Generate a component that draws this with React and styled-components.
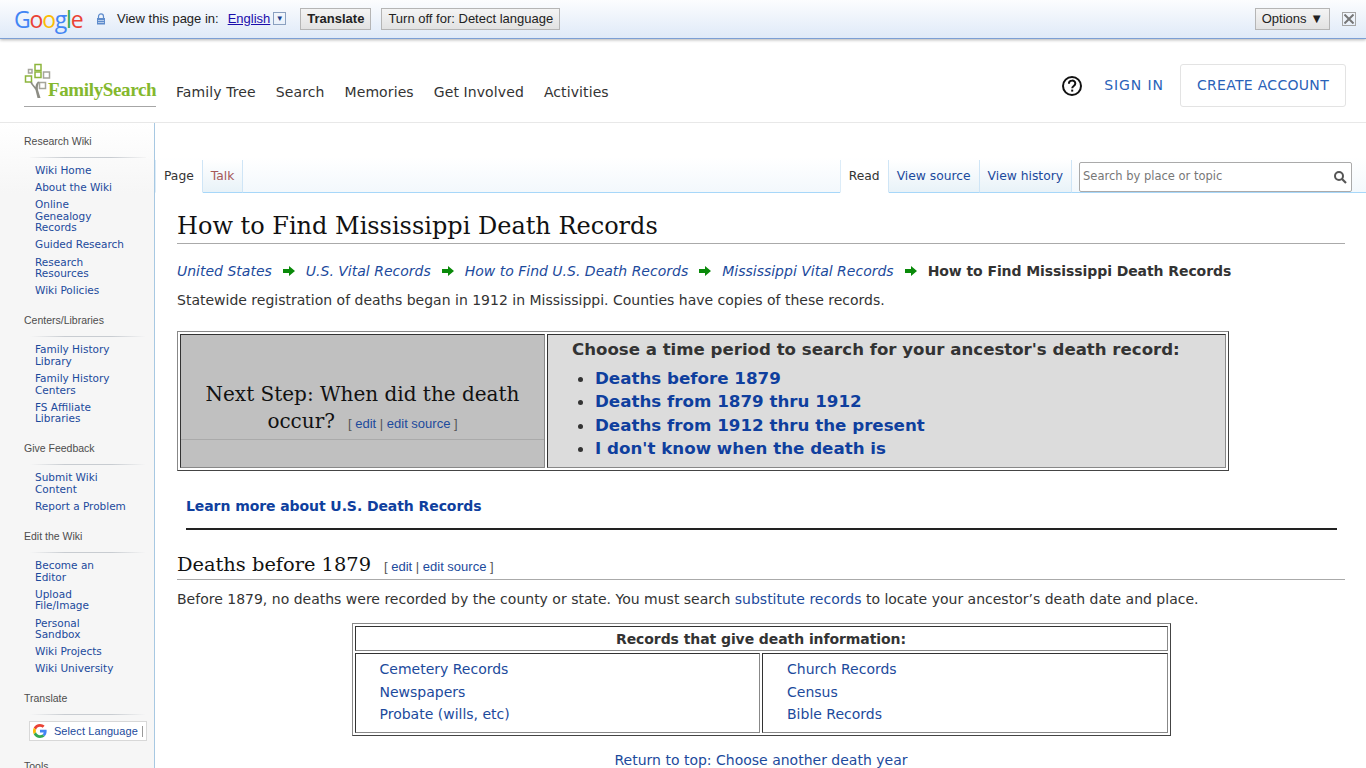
import styled, { createGlobalStyle } from "styled-components";

const GlobalStyle = createGlobalStyle`
  html, body {
    margin: 0;
    padding: 0;
    height: 768px;
    overflow: hidden;
    background: #fff;
    font-family: "DejaVu Sans", Verdana, sans-serif;
    color: #333;
  }
  a { color: #1c4a9c; text-decoration: none; }
`;

const sideNav = [
  { title: "Research Wiki", links: ["Wiki Home", "About the Wiki", "Online Genealogy Records", "Guided Research", "Research Resources", "Wiki Policies"] },
  { title: "Centers/Libraries", links: ["Family History Library", "Family History Centers", "FS Affiliate Libraries"] },
  { title: "Give Feedback", links: ["Submit Wiki Content", "Report a Problem"] },
  { title: "Edit the Wiki", links: ["Become an Editor", "Upload File/Image", "Personal Sandbox", "Wiki Projects", "Wiki University"] },
];

const crumbs = ["United States", "U.S. Vital Records", "How to Find U.S. Death Records", "Mississippi Vital Records"];

export default function App() {
  return (
    <>
      <GlobalStyle />
      <TranslateBar>
        <GoogleWord>
          <GoogleLetter $c="#4285f4">G</GoogleLetter>
          <GoogleLetter $c="#ea4335">o</GoogleLetter>
          <GoogleLetter $c="#fbbc05">o</GoogleLetter>
          <GoogleLetter $c="#4285f4">g</GoogleLetter>
          <GoogleLetter $c="#34a853">l</GoogleLetter>
          <GoogleLetter $c="#ea4335">e</GoogleLetter>
        </GoogleWord>
        <LockIcon viewBox="0 0 10 12">
          <path d="M2.500 5V3.400a2.500 2.500 0 0 1 5 0V5" fill="none" stroke="#5f8ccc" strokeWidth="1.200" />
          <rect x="1" y="5" width="8" height="6.500" fill="#5f8ccc" />
          <path d="M2 7.500h6M2 9.500h6" stroke="#dbe6f5" strokeWidth="0.700" />
        </LockIcon>
        <BarLabel>View this page in:</BarLabel>
        <LangLink>English</LangLink>
        <LangDrop>▼</LangDrop>
        <BarButton $bold>Translate</BarButton>
        <BarButton>Turn off for: Detect language</BarButton>
        <BarSpacer />
        <BarButton>Options ▼</BarButton>
        <CloseBox>
          <svg width="10" height="10" viewBox="0 0 10 10">
            <path d="M0.500 0.500l9 9M9.500 0.500l-9 9" stroke="#777" strokeWidth="2" />
          </svg>
        </CloseBox>
      </TranslateBar>

      <SiteHeader>
        <Logo>
          <svg width="34" height="36" viewBox="0 0 34 36">
            <g fill="none" strokeWidth="1.500">
              <rect x="11" y="1.500" width="6" height="6" stroke="#8db53c" />
              <rect x="4.500" y="6.500" width="3.500" height="3.500" stroke="#a5a59a" />
              <rect x="1.500" y="13" width="6" height="6" stroke="#8db53c" />
              <rect x="11" y="9" width="6" height="5.500" stroke="#8db53c" />
              <rect x="19.500" y="9" width="6" height="6" stroke="#a5a59a" />
              <rect x="15.500" y="19.500" width="6" height="6" stroke="#a5a59a" />
            </g>
            <path d="M6 19c1 3 4 5 5.500 8l2 8h3l-2.500-8c-.500-3 0-6 1.500-8l-1.500-.500c-1.500 1.500-2.500 3.500-2.500 5.500-1.500-2-3-3-3.500-5z" fill="#8d8d84" />
          </svg>
          <LogoWord>FamilySearch</LogoWord>
        </Logo>
        <MainNav>
          <a>Family Tree</a>
          <a>Search</a>
          <a>Memories</a>
          <a>Get Involved</a>
          <a>Activities</a>
        </MainNav>
        <HeaderRight>
          <svg width="22" height="22" viewBox="0 0 22 22">
            <circle cx="11" cy="11" r="9" fill="none" stroke="#111" strokeWidth="2" />
            <path d="M7.900 8.800c0-4.200 6.400-4.200 6.400-.2 0 2.400-3.100 2.300-3.100 4.600" fill="none" stroke="#111" strokeWidth="2" />
            <rect x="10.200" y="14.600" width="2" height="2" fill="#111" />
          </svg>
          <SignIn>SIGN IN</SignIn>
          <CreateAccount>CREATE ACCOUNT</CreateAccount>
        </HeaderRight>
      </SiteHeader>

      <PageBody>
        <Sidebar>
          {sideNav.map((s) => (
            <NavSection key={s.title}>
              <NavTitle>{s.title}</NavTitle>
              <NavList>
                {s.links.map((l) => (
                  <li key={l}><a>{l}</a></li>
                ))}
              </NavList>
            </NavSection>
          ))}
          <NavSection>
            <NavTitle>Translate</NavTitle>
            <TranslateWidget>
              <svg width="14" height="14" viewBox="0 0 48 48">
                <path fill="#ea4335" d="M24 9.500c3.500 0 6.700 1.200 9.200 3.600l6.800-6.800C35.900 2.400 30.500 0 24 0 14.600 0 6.500 5.400 2.600 13.200l7.900 6.200C12.400 13.700 17.700 9.500 24 9.500z" />
                <path fill="#4285f4" d="M47 24.500c0-1.600-.1-3.100-.4-4.500H24v9h12.900c-.6 3-2.200 5.500-4.800 7.200l7.700 6c4.500-4.200 7.200-10.300 7.200-17.700z" />
                <path fill="#fbbc05" d="M10.500 28.600c-.5-1.400-.8-3-.8-4.600s.3-3.200.8-4.600l-7.900-6.200C1 16.500 0 20.100 0 24s1 7.500 2.600 10.800l7.900-6.200z" />
                <path fill="#34a853" d="M24 48c6.500 0 11.900-2.100 15.900-5.800l-7.700-6c-2.200 1.500-4.900 2.300-8.200 2.300-6.300 0-11.600-4.200-13.500-9.900l-7.900 6.200C6.500 42.600 14.600 48 24 48z" />
              </svg>
              <a>Select Language</a>
              <WidgetBar />
            </TranslateWidget>
          </NavSection>
          <NavSection>
            <NavTitle>Tools</NavTitle>
            <NavList>
              <li><a>What links here</a></li>
              <li><a>Related changes</a></li>
            </NavList>
          </NavSection>
        </Sidebar>

        <Main>
          <TabRow>
            <TabGroup>
              <Tab $active>Page</Tab>
              <Tab $red>Talk</Tab>
            </TabGroup>
            <TabGroup>
              <Tab $active>Read</Tab>
              <Tab>View source</Tab>
              <Tab>View history</Tab>
              <SearchBox>
                <span>Search by place or topic</span>
                <svg width="14" height="14" viewBox="0 0 14 14">
                  <circle cx="6" cy="6" r="4" fill="none" stroke="#555" strokeWidth="2" />
                  <path d="M9 9l4 4" stroke="#555" strokeWidth="2.200" />
                </svg>
              </SearchBox>
            </TabGroup>
          </TabRow>

          <Article>
            <PageTitle>How to Find Mississippi Death Records</PageTitle>
            <Breadcrumb>
              {crumbs.map((c) => (
                <span key={c}>
                  <a>{c}</a>
                  <Arrow viewBox="0 0 12 10">
                    <path d="M0 3h6V0l6 5-6 5V7H0z" fill="#0a8a0a" />
                  </Arrow>
                </span>
              ))}
              <strong>How to Find Mississippi Death Records</strong>
            </Breadcrumb>
            <Intro>Statewide registration of deaths began in 1912 in Mississippi. Counties have copies of these records.</Intro>

            <StepTable>
              <tbody>
                <tr>
                  <StepLeft>
                    <StepHeading>
                      Next Step: When did the death occur?
                      <SmallEdit>[ <a>edit</a> | <a>edit source</a> ]</SmallEdit>
                    </StepHeading>
                  </StepLeft>
                  <StepRight>
                    <StepTitle>Choose a time period to search for your ancestor's death record:</StepTitle>
                    <StepList>
                      <li><a>Deaths before 1879</a></li>
                      <li><a>Deaths from 1879 thru 1912</a></li>
                      <li><a>Deaths from 1912 thru the present</a></li>
                      <li><a>I don't know when the death is</a></li>
                    </StepList>
                  </StepRight>
                </tr>
              </tbody>
            </StepTable>

            <LearnMore><a>Learn more about U.S. Death Records</a></LearnMore>
            <BlackRule />

            <SectionHeading>
              Deaths before 1879
              <SmallEdit>[ <a>edit</a> | <a>edit source</a> ]</SmallEdit>
            </SectionHeading>
            <Paragraph>
              Before 1879, no deaths were recorded by the county or state. You must search <a>substitute records</a> to locate your ancestor’s death date and place.
            </Paragraph>

            <RecordsTable>
              <tbody>
                <tr>
                  <RecordsHead colSpan={2}>Records that give death information:</RecordsHead>
                </tr>
                <tr>
                  <RecordsCell>
                    <a>Cemetery Records</a>
                    <a>Newspapers</a>
                    <a>Probate (wills, etc)</a>
                  </RecordsCell>
                  <RecordsCell>
                    <a>Church Records</a>
                    <a>Census</a>
                    <a>Bible Records</a>
                  </RecordsCell>
                </tr>
              </tbody>
            </RecordsTable>

            <ReturnLink><a>Return to top: Choose another death year</a></ReturnLink>
          </Article>
        </Main>
      </PageBody>
    </>
  );
}

const TranslateBar = styled.div`
  height: 39px;
  box-sizing: border-box;
  display: flex;
  align-items: center;
  padding: 0 10px 1px 14px;
  background: linear-gradient(#fcfdfe, #dfeaf8);
  border-bottom: 1px solid #7c9fd4;
  box-shadow: 0 1px 3px rgba(0, 0, 0, 0.3);
  position: relative;
  font-family: "Liberation Sans", Arial, sans-serif;
  font-size: 13px;
  color: #222;
`;

const GoogleWord = styled.div`
  font-family: "Open Sans", sans-serif;
  font-size: 23px;
  font-weight: 500;
  letter-spacing: -1.2px;
  width: 82px;
`;

const GoogleLetter = styled.span`
  color: ${(p) => p.$c};
`;

const LockIcon = styled.svg`
  width: 10px;
  height: 12px;
  margin-right: 11px;
`;

const BarLabel = styled.span`
  margin-right: 9px;
`;

const LangLink = styled.span`
  color: #1a0dab;
  text-decoration: underline;
  margin-right: 3px;
`;

const LangDrop = styled.span`
  width: 13px;
  height: 13px;
  box-sizing: border-box;
  border: 1px solid #8aa0c0;
  font-size: 8px;
  line-height: 11px;
  text-align: center;
  color: #1b3f8c;
  margin-right: 14px;
`;

const BarButton = styled.button`
  height: 22px;
  padding: 0 6px;
  margin-right: 10px;
  border: 1px solid #b5b5b5;
  background: linear-gradient(#f4f4f4, #e2e2e2);
  font-family: "Liberation Sans", Arial, sans-serif;
  font-size: 13px;
  font-weight: ${(p) => (p.$bold ? 700 : 400)};
  color: #222;
`;

const BarSpacer = styled.div`
  flex: 1;
`;

const CloseBox = styled.div`
  width: 14px;
  height: 14px;
  box-sizing: border-box;
  margin-left: 2px;
  border: 1px solid #a5a5a5;
  display: flex;
  align-items: center;
  justify-content: center;
`;

const SiteHeader = styled.header`
  height: 84px;
  box-sizing: border-box;
  display: flex;
  padding: 0 20px 0 24px;
  border-bottom: 1px solid #e8e8e8;
`;

const Logo = styled.div`
  width: 132px;
  height: 43px;
  margin-top: 24px;
  border-bottom: 1px solid #a6a6a6;
  position: relative;
  svg {
    display: block;
  }
`;

const LogoWord = styled.span`
  position: absolute;
  left: 24px;
  top: 16px;
  font-family: "Liberation Serif", serif;
  font-weight: 700;
  font-size: 19px;
  letter-spacing: -0.37px;
  color: #84b82e;
`;

const MainNav = styled.nav`
  display: flex;
  gap: 20px;
  margin-left: 20px;
  padding-top: 45px;
  font-size: 14px;
  line-height: 17px;
  letter-spacing: 0.1px;
  a { color: #333; }
`;

const HeaderRight = styled.div`
  margin-left: auto;
  display: flex;
  align-items: center;
  height: 43px;
  margin-top: 25px;
  font-size: 14px;
  line-height: 17px;
`;

const SignIn = styled.a`
  && { color: #2a62b8; }
  margin: 0 16px 0 21px;
  letter-spacing: 0.9px;
`;

const CreateAccount = styled.a`
  && { color: #2a62b8; }
  border: 1px solid #e3e3e3;
  border-radius: 3px;
  padding: 12px 16px;
  letter-spacing: 0.3px;
`;

const PageBody = styled.div`
  display: flex;
  align-items: stretch;
  height: 645px;
`;

const Sidebar = styled.aside`
  width: 155px;
  flex: none;
  box-sizing: border-box;
  padding: 11px 8px 0 24px;
  border-right: 1px solid #a7c8e2;
  background: linear-gradient(#fff, #f6f6f6 70px);
  overflow: hidden;
`;

const NavSection = styled.section`
  margin-bottom: 11px;
`;

const NavTitle = styled.div`
  font-family: "Liberation Sans", Arial, sans-serif;
  font-size: 10.500px;
  line-height: 14px;
  color: #4d4d4d;
  padding-bottom: 10px;
  margin-bottom: 7px;
  position: relative;
  &::after {
    content: "";
    position: absolute;
    left: 6px;
    right: 0;
    bottom: 0;
    height: 1px;
    background: linear-gradient(to right, #f6f6f6, #c8ccd1 30%, #c8ccd1 70%, #f6f6f6);
  }
`;

const NavList = styled.ul`
  list-style: none;
  margin: 0;
  padding: 0 18px 0 11px;
  font-size: 10.500px;
  line-height: 11.600px;
  li { padding: 0 0 5.500px; }
  a { color: #1c4a9c; }
`;

const TranslateWidget = styled.div`
  display: flex;
  align-items: center;
  gap: 7px;
  width: 118px;
  height: 20px;
  box-sizing: border-box;
  margin: -1px 0 18px 5px;
  padding: 0 3px;
  background: #fff;
  border: 1px solid #d8d8d8;
  font-family: "Liberation Sans", Arial, sans-serif;
  font-size: 11px;
  letter-spacing: 0.1px;
  a { color: #1c4a9c; white-space: nowrap; }
`;

const WidgetBar = styled.i`
  width: 1px;
  height: 11px;
  background: #999;
  margin-left: -3px;
`;

const Main = styled.main`
  flex: 1;
  min-width: 0;
  overflow: hidden;
`;

const TabRow = styled.div`
  height: 70px;
  box-sizing: border-box;
  display: flex;
  justify-content: space-between;
  align-items: flex-end;
  padding-right: 14px;
  border-bottom: 1px solid #a7d7f9;
  background: linear-gradient(#fff 50%, #f3f8fc);
`;

const TabGroup = styled.div`
  display: flex;
  align-items: flex-end;
`;

const Tab = styled.a`
  height: 33px;
  box-sizing: border-box;
  padding: 9px 8px 0;
  font-size: 12.300px;
  line-height: 15px;
  margin-bottom: -1px;
  border-right: 1px solid #cfe5f6;
  border-left: ${(p) => (p.$active ? "1px solid #dcecf8" : "0")};
  background: ${(p) => (p.$active ? "#fff" : "linear-gradient(#fff, #e8f2f8)")};
  && { color: ${(p) => (p.$active ? "#333" : p.$red ? "#a55858" : "#1c4a9c")}; }
  border-bottom: 1px solid ${(p) => (p.$active ? "#fff" : "#a7d7f9")};
`;

const SearchBox = styled.div`
  width: 273px;
  height: 30px;
  box-sizing: border-box;
  margin: 0 0 0 7px;
  padding: 0 4px 3px 3px;
  display: flex;
  align-items: center;
  justify-content: space-between;
  border: 1px solid #aaa;
  border-radius: 2px;
  background: #fff;
  font-size: 11.500px;
  color: #777;
  svg { margin-top: 3px; }
`;

const Article = styled.article`
  padding: 0 21px 0 22px;
  font-size: 14px;
  line-height: 20px;
`;

const PageTitle = styled.h1`
  margin: 17px 0 0;
  height: 34px;
  box-sizing: border-box;
  font-family: "DejaVu Serif", serif;
  font-size: 24px;
  line-height: 32px;
  font-weight: 400;
  color: #111;
  border-bottom: 1px solid #aaa;
`;

const Breadcrumb = styled.div`
  margin-top: 17px;
  white-space: nowrap;
  a { font-style: italic; }
  strong { color: #333; letter-spacing: -0.08px; }
`;

const Arrow = styled.svg`
  width: 12px;
  height: 10px;
  margin: 0 11px;
`;

const Intro = styled.p`
  margin: 9px 0 0;
`;

const StepTable = styled.table`
  margin-top: 21px;
  width: 1052px;
  height: 140px;
  border-collapse: separate;
  border-spacing: 2px;
  border: 1px solid;
  border-color: #888 #444 #444 #888;
`;

const StepLeft = styled.td`
  width: 363px;
  background: #c0c0c0;
  border: 1px solid;
  border-color: #333 #888 #888 #333;
  padding: 46px 0 0;
  vertical-align: top;
  text-align: center;
`;

const StepHeading = styled.div`
  font-family: "DejaVu Serif", serif;
  font-size: 20px;
  line-height: 27px;
  color: #111;
  padding: 0 2px 2px;
  border-bottom: 1px solid #aaa;
`;

const SmallEdit = styled.span`
  font-family: "Liberation Sans", Arial, sans-serif;
  font-size: 13px;
  font-weight: 400;
  color: #555;
  margin-left: 13px;
`;

const StepRight = styled.td`
  background: #dcdcdc;
  border: 1px solid;
  border-color: #333 #888 #888 #333;
  padding: 4px 24px 0;
  vertical-align: top;
`;

const StepTitle = styled.div`
  font-size: 16.600px;
  font-weight: 700;
  line-height: 21px;
  color: #333;
  white-space: nowrap;
`;

const StepList = styled.ul`
  margin: 7px 0 0;
  padding-left: 23px;
  font-size: 16.700px;
  font-weight: 700;
  line-height: 23.400px;
  a { color: #0f3f9e; }
`;

const LearnMore = styled.div`
  margin: 25px 0 0 9px;
  font-weight: 700;
  letter-spacing: -0.08px;
  a { color: #0f3f9e; }
`;

const BlackRule = styled.hr`
  margin: 12px 8px 0 9px;
  border: 0;
  border-top: 2px solid #222;
`;

const SectionHeading = styled.h2`
  margin: 21px 0 0;
  height: 29px;
  box-sizing: border-box;
  font-family: "DejaVu Serif", serif;
  font-size: 19.400px;
  line-height: 28px;
  font-weight: 400;
  color: #111;
  border-bottom: 1px solid #aaa;
`;

const Paragraph = styled.p`
  margin: 9px 0 0;
`;

const RecordsTable = styled.table`
  margin: 14px auto 0;
  width: 819px;
  border-collapse: separate;
  border-spacing: 2px;
  border: 1px solid;
  border-color: #888 #444 #444 #888;
`;

const RecordsHead = styled.td`
  height: 23px;
  padding: 0;
  text-align: center;
  font-weight: 700;
  letter-spacing: -0.08px;
  color: #333;
  border: 1px solid;
  border-color: #333 #888 #888 #333;
`;

const RecordsCell = styled.td`
  padding: 4px 24px 6px;
  width: 50%;
  border: 1px solid;
  border-color: #333 #888 #888 #333;
  a {
    display: block;
    line-height: 22.500px;
  }
`;

const ReturnLink = styled.div`
  margin-top: 14px;
  text-align: center;
`;
